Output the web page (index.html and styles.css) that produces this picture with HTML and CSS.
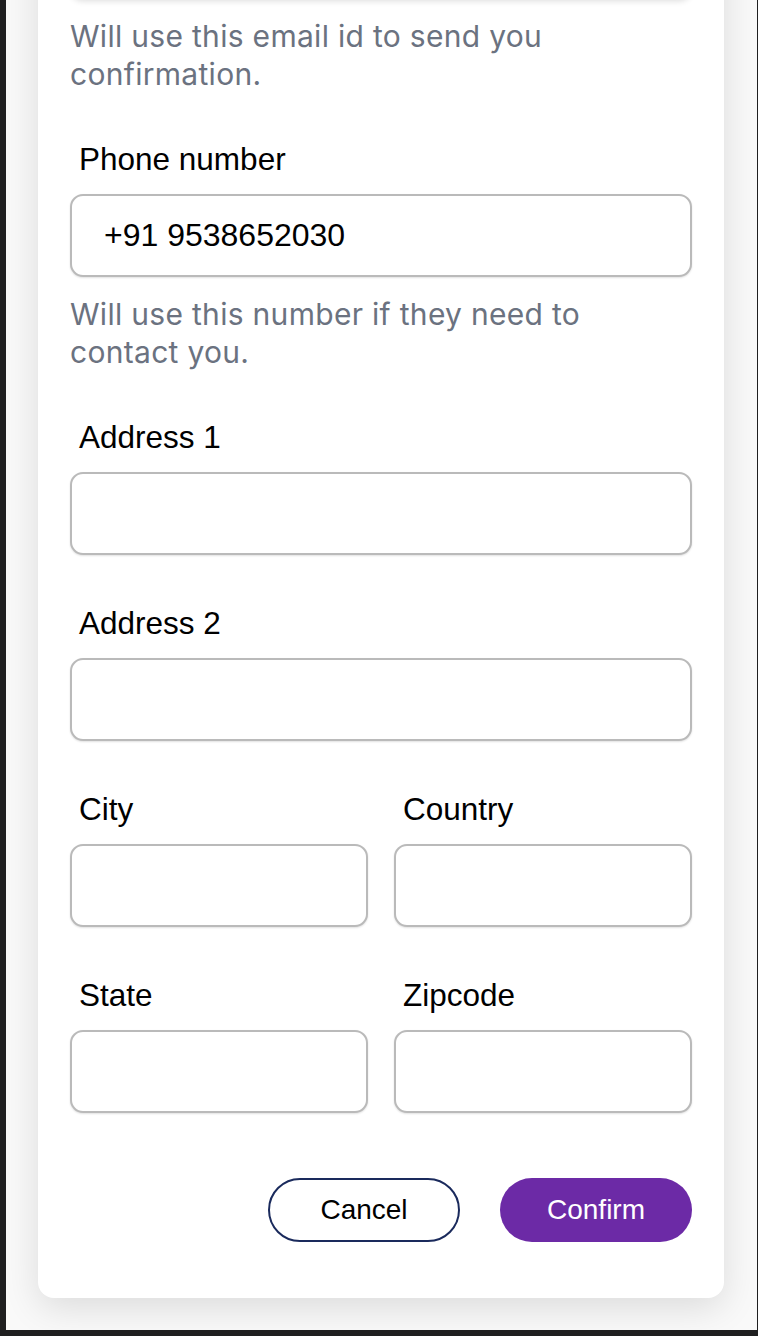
FILE: index.html
```html
<!DOCTYPE html>
<html lang="en">
<head>
<meta charset="utf-8">
<title>Contact details</title>
<link rel="stylesheet" href="styles.css">
</head>
<body>
<div class="frame">
  <div class="card">
    <form class="form">
      <div class="field">
        <input class="input input-focus" id="email" type="email" value="" aria-label="Email">
        <p class="hint">Will use this email id to send you confirmation.</p>
      </div>
      <div class="field">
        <label class="label" for="phone">Phone number</label>
        <input class="input" id="phone" type="text" value="+91 9538652030">
        <p class="hint">Will use this number if they need to contact you.</p>
      </div>
      <div class="field">
        <label class="label" for="addr1">Address 1</label>
        <input class="input" id="addr1" type="text">
      </div>
      <div class="field">
        <label class="label" for="addr2">Address 2</label>
        <input class="input" id="addr2" type="text">
      </div>
      <div class="row">
        <div class="field">
          <label class="label" for="city">City</label>
          <input class="input" id="city" type="text">
        </div>
        <div class="field">
          <label class="label" for="country">Country</label>
          <input class="input" id="country" type="text">
        </div>
      </div>
      <div class="row">
        <div class="field">
          <label class="label" for="state">State</label>
          <input class="input" id="state" type="text">
        </div>
        <div class="field">
          <label class="label" for="zip">Zipcode</label>
          <input class="input" id="zip" type="text">
        </div>
      </div>
      <div class="actions">
        <button type="button" class="btn btn-cancel">Cancel</button>
        <button type="button" class="btn btn-confirm">Confirm</button>
      </div>
    </form>
  </div>
</div>
</body>
</html>
```

FILE: styles.css
```css
* { box-sizing: border-box; }

html, body {
  margin: 0;
  padding: 0;
  background: #1f1f20;
}

body {
  width: 758px;
  height: 1336px;
  overflow: hidden;
}

.frame {
  margin: 0 1px 0 6px;
  height: 1330px;
  background: #f9f9f9;
  overflow: hidden;
  display: flex;
  flex-direction: column;
  justify-content: flex-end;
  padding: 0 33px 32px 32px;
}

.card {
  flex-shrink: 0;
  background: #ffffff;
  border-radius: 16px;
  box-shadow: 0 10px 36px rgba(0, 0, 0, 0.12);
  padding: 0 32px 56px 32px;
}

.form {
  display: flex;
  flex-direction: column;
  gap: 49px;
}

.field {
  display: flex;
  flex-direction: column;
}

.label {
  font-family: "Liberation Sans", Arial, sans-serif;
  font-size: 31.5px;
  line-height: 38px;
  color: #000;
  padding-left: 9px;
  margin-bottom: 16px;
}

.input {
  display: block;
  width: 100%;
  height: 83px;
  border: 2px solid #bababa;
  border-radius: 13px;
  background: #fff;
  box-shadow: 0 1px 2px rgba(0, 0, 0, 0.12);
  padding: 0 32px;
  font-family: "Liberation Sans", Arial, sans-serif;
  font-size: 32px;
  color: #000;
  outline: none;
}

.input-focus {
  box-shadow: 0 2px 6px rgba(0, 0, 0, 0.14);
}

.hint {
  margin: 18px 0 -2px 0;
  font-family: Inter, "Noto Sans", sans-serif;
  font-size: 30px;
  letter-spacing: 0.3px;
  line-height: 38px;
  color: #6b7280;
}

.row {
  display: grid;
  grid-template-columns: 1fr 1fr;
  column-gap: 26px;
}

.actions {
  display: flex;
  justify-content: flex-end;
  gap: 40px;
  margin-top: 16px;
}

.btn {
  width: 192px;
  height: 64px;
  border-radius: 32px;
  font-family: "Liberation Sans", Arial, sans-serif;
  font-size: 28px;
  cursor: pointer;
}

.btn-cancel {
  background: #fff;
  color: #000;
  border: 2px solid #1a2a5c;
}

.btn-confirm {
  background: #6c2aa6;
  color: #fff;
  border: none;
}
```
